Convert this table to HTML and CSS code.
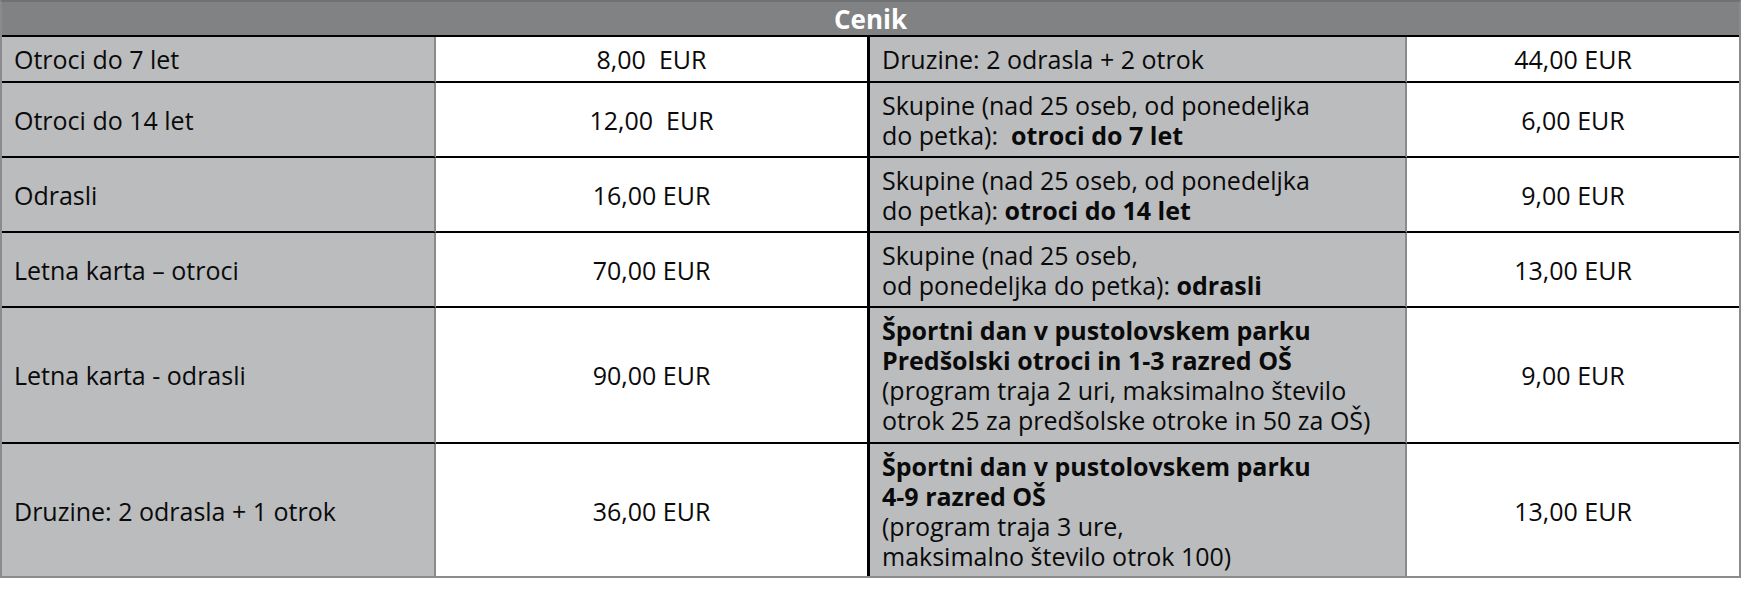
FILE: index.html
```html
<!DOCTYPE html>
<html lang="sl">
<head>
<meta charset="utf-8">
<title>Cenik</title>
<link rel="stylesheet" href="styles.css">
</head>
<body>
<table class="price-table">
  <colgroup>
    <col class="c-label">
    <col class="c-value">
    <col class="c-label2">
    <col class="c-value2">
  </colgroup>
  <thead>
    <tr><th colspan="4" class="title">Cenik</th></tr>
  </thead>
  <tbody>
    <tr class="first">
      <td class="label">Otroci do 7 let</td>
      <td class="value">8,00&nbsp; EUR</td>
      <td class="label sep">Druzine: 2 odrasla + 2 otrok</td>
      <td class="value last">44,00 EUR</td>
    </tr>
    <tr>
      <td class="label">Otroci do 14 let</td>
      <td class="value">12,00&nbsp; EUR</td>
      <td class="label sep">Skupine (nad 25 oseb, od ponedeljka<br>do petka):&nbsp; <b>otroci do 7 let</b></td>
      <td class="value last">6,00 EUR</td>
    </tr>
    <tr>
      <td class="label">Odrasli</td>
      <td class="value">16,00 EUR</td>
      <td class="label sep">Skupine (nad 25 oseb, od ponedeljka<br>do petka): <b>otroci do 14 let</b></td>
      <td class="value last">9,00 EUR</td>
    </tr>
    <tr>
      <td class="label">Letna karta – otroci</td>
      <td class="value">70,00 EUR</td>
      <td class="label sep">Skupine (nad 25 oseb,<br>od ponedeljka do petka): <b>odrasli</b></td>
      <td class="value last">13,00 EUR</td>
    </tr>
    <tr class="tall">
      <td class="label">Letna karta - odrasli</td>
      <td class="value">90,00 EUR</td>
      <td class="label sep"><b>Športni dan v pustolovskem parku<br>Predšolski otroci in 1-3 razred OŠ</b><br>(program traja 2 uri, maksimalno število<br>otrok 25 za predšolske otroke in 50 za OŠ)</td>
      <td class="value last">9,00 EUR</td>
    </tr>
    <tr class="final">
      <td class="label">Druzine: 2 odrasla + 1 otrok</td>
      <td class="value">36,00 EUR</td>
      <td class="label sep"><b>Športni dan v pustolovskem parku<br>4-9 razred OŠ</b><br>(program traja 3 ure,<br>maksimalno število otrok 100)</td>
      <td class="value last">13,00 EUR</td>
    </tr>
  </tbody>
</table>
</body>
</html>
```
FILE: styles.css
```css
html, body {
  margin: 0;
  padding: 0;
  background: #ffffff;
}

.price-table {
  box-sizing: border-box;
  width: 1741px;
  table-layout: fixed;
  border-collapse: separate;
  border-spacing: 0;
  border: 2px solid #8b8b8d;
  border-top-color: #707173;
  font-family: "Open Sans", "Noto Sans", sans-serif;
  font-size: 25px;
  line-height: 30px;
  color: #0a0a0a;
}

.c-label { width: 434px; }
.c-value { width: 434px; }
.c-label2 { width: 537px; }
.c-value2 { width: 332px; }

.price-table th,
.price-table td {
  box-sizing: border-box;
  vertical-align: middle;
}

.title {
  background: #818284;
  color: #ffffff;
  font-weight: 700;
  font-size: 26px;
  line-height: 30px;
  text-align: center;
  padding: 2px 0 1px;
  border-bottom: 2px solid #000000;
}

.price-table td {
  padding: 7px 12px 6px 12px;
  border-bottom: 2px solid #000000;
  border-right: 2px solid #8b8b8d;
}

.price-table .first td,
.price-table .tall td {
  padding-bottom: 7px;
}

.price-table .final td {
  border-bottom: none;
  padding-bottom: 5px;
}

.label {
  background: #bbbcbe;
  text-align: left;
}

.value {
  background: #ffffff;
  text-align: center;
}

.price-table td.value {
  padding-left: 4px;
  padding-right: 4px;
}

.price-table td.value:not(.last) {
  border-right: 3px solid #000000;
}

.price-table td.last {
  border-right: none;
}

.label b {
  font-weight: 700;
}
```
